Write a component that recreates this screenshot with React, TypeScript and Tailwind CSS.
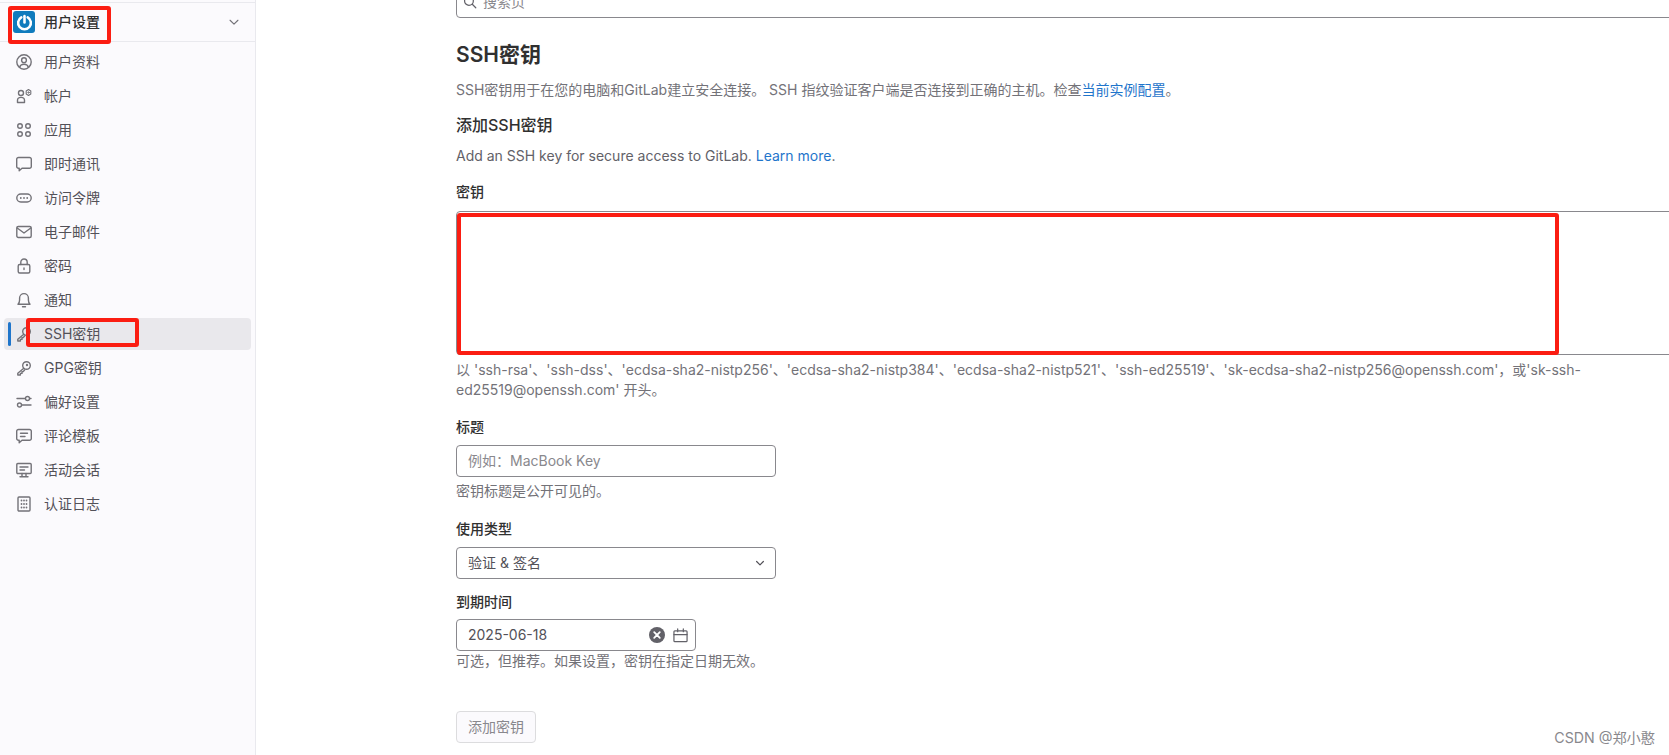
import type { ReactNode } from "react";

const font = "font-['Inter','Noto_Sans_CJK_SC',sans-serif]";

function Icon({ children }: { children: ReactNode }) {
  return (
    <svg viewBox="0 0 16 16" fill="none" stroke="currentColor" strokeWidth="1.4" strokeLinecap="round" strokeLinejoin="round" className="w-4 h-4 shrink-0 text-[#737278]">
      {children}
    </svg>
  );
}

const KeyIcon = (
  <Icon>
    <circle cx="10.5" cy="5.5" r="3.8" />
    <path d="M7.8 8.2 1.8 13.2V15h2.6v-1.6h1.6v-1.6l1.2-.2 1.4-1.6" />
    <circle cx="11" cy="5" r=".5" />
  </Icon>
);

const items: { label: string; icon: ReactNode; active?: boolean }[] = [
  {
    label: "用户资料",
    icon: (
      <Icon>
        <circle cx="8" cy="8" r="7.2" />
        <circle cx="8" cy="6.2" r="2.4" />
        <path d="M3.6 13.2c.6-2.2 2.2-3 4.4-3s3.8.8 4.4 3" />
      </Icon>
    ),
  },
  {
    label: "帐户",
    icon: (
      <Icon>
        <circle cx="5" cy="5" r="2.5" />
        <path d="M1.5 12.2a3.5 2.8 0 0 1 7 0v2.3h-7Z" />
        <path d="M12.5 1.5 14.8 3v3l-2.3 1.5L10.2 6V3Z" strokeWidth="1.1" />
        <circle cx="12.5" cy="4.5" r=".7" strokeWidth="1" />
      </Icon>
    ),
  },
  {
    label: "应用",
    icon: (
      <Icon>
        <circle cx="4" cy="4" r="2.3" />
        <circle cx="12" cy="4" r="2.3" />
        <circle cx="4" cy="12" r="2.3" />
        <circle cx="12" cy="12" r="2.3" />
      </Icon>
    ),
  },
  {
    label: "即时通讯",
    icon: (
      <Icon>
        <path d="M2.5 1.5h11a1.8 1.8 0 0 1 1.8 1.8v7.2a1.8 1.8 0 0 1-1.8 1.8H6L3.2 14.8v-2.5h-.7A1.8 1.8 0 0 1 .7 10.5V3.3a1.8 1.8 0 0 1 1.8-1.8Z" />
      </Icon>
    ),
  },
  {
    label: "访问令牌",
    icon: (
      <Icon>
        <rect x=".8" y="4" width="14.4" height="8" rx="4" />
        <path d="M4.8 8h.01M8 8h.01M11.2 8h.01" strokeWidth="1.8" />
      </Icon>
    ),
  },
  {
    label: "电子邮件",
    icon: (
      <Icon>
        <rect x=".8" y="2.5" width="14.4" height="11" rx="1.5" />
        <path d="M1.2 4 8 9l6.8-5" />
      </Icon>
    ),
  },
  {
    label: "密码",
    icon: (
      <Icon>
        <rect x="2.2" y="6.5" width="11.6" height="8.5" rx="1.5" />
        <path d="M4.8 6.5V4.2a3.2 3.2 0 0 1 6.4 0v2.3M8 10v1.5" />
      </Icon>
    ),
  },
  {
    label: "通知",
    icon: (
      <Icon>
        <path d="M2 12.2h12c-1.2-1.2-1.6-2.4-1.6-4.2V6a4.4 4.4 0 0 0-8.8 0v2c0 1.8-.4 3-1.6 4.2ZM6.5 14.8h3" />
      </Icon>
    ),
  },
  { label: "SSH密钥", icon: KeyIcon, active: true },
  { label: "GPG密钥", icon: KeyIcon },
  {
    label: "偏好设置",
    icon: (
      <Icon>
        <circle cx="11.5" cy="4.5" r="2" />
        <circle cx="3.5" cy="11" r="2" />
        <path d="M1 4.5h8M14 4.5h1M6 11h9" />
      </Icon>
    ),
  },
  {
    label: "评论模板",
    icon: (
      <Icon>
        <path d="M2.5 1.5h11a1.8 1.8 0 0 1 1.8 1.8v7.2a1.8 1.8 0 0 1-1.8 1.8H6L3.2 14.8v-2.5h-.7A1.8 1.8 0 0 1 .7 10.5V3.3a1.8 1.8 0 0 1 1.8-1.8Z" />
        <path d="M4.5 5.2h7M4.5 8.5h4.5" />
      </Icon>
    ),
  },
  {
    label: "活动会话",
    icon: (
      <Icon>
        <rect x=".8" y="1.5" width="14.4" height="10" rx="1" />
        <path d="M4 5h8M4 8h4.5M6 11.5v3M10 11.5v3M4 14.8h8" />
      </Icon>
    ),
  },
  {
    label: "认证日志",
    icon: (
      <Icon>
        <rect x="2" y="1" width="12" height="14" rx="1" />
        <path d="M5.5 4.5h.01M8 4.5h.01M10.5 4.5h.01M5.5 8h.01M8 8h.01M10.5 8h.01M5.5 11.5h.01M8 11.5h.01M10.5 11.5h.01" strokeWidth="1.8" />
      </Icon>
    ),
  },
];

function Sidebar() {
  return (
    <aside className="relative w-[256px] h-full shrink-0 bg-[#fbfafd] border-r border-[#e9e9ee] pt-[2px]">
      <div className="flex items-center h-[40px] border-y border-[#e9e9ee] pl-[13px] pr-[13px]">
        <div className="w-[22px] h-[22px] rounded-[3px] bg-[#0f7bbd] flex items-center justify-center">
          <svg viewBox="0 0 16 16" fill="none" stroke="white" strokeWidth="2.4" strokeLinecap="round" className="w-[17px] h-[17px]">
            <path d="M5 3.2a6 6 0 1 0 6 0" />
            <path d="M8 2v6" />
          </svg>
        </div>
        <span className="ml-[9px] text-sm font-medium text-[#303030]">用户设置</span>
        <svg viewBox="0 0 16 16" fill="none" stroke="#737278" strokeWidth="1.3" strokeLinecap="round" strokeLinejoin="round" className="w-3.5 h-3.5 ml-auto mr-[1px]">
          <path d="m3.5 6 4.5 4.5L12.5 6" />
        </svg>
      </div>
      <nav className="px-1 pt-[2px]">
        {items.map((item) => (
          <div key={item.label} className={`relative flex items-center h-8 mt-[2px] pl-3 rounded text-sm text-[#535158] ${item.active ? "bg-[#e9e8ec]" : ""}`}>
            {item.active && <span className="absolute left-[4px] top-[4px] bottom-[4px] w-[3px] rounded-sm bg-[#1f75cb]" />}
            {item.icon}
            <span className="ml-3">{item.label}</span>
          </div>
        ))}
      </nav>
    </aside>
  );
}

function Label({ children, className = "" }: { children: ReactNode; className?: string }) {
  return <div className={`text-sm font-medium leading-5 text-[#303030] ${className}`}>{children}</div>;
}

function Help({ children }: { children: ReactNode }) {
  return <p className="text-sm leading-5 text-[#737278]">{children}</p>;
}

function MainForm() {
  return (
    <main className="flex-1 min-w-0 pl-[200px] overflow-hidden">
      <div className="w-[1400px]">
        <div className="flex items-center gap-[6px] h-8 mt-[-14px] px-[6px] border border-[#89888d] rounded text-sm text-[#89888d]">
          <svg viewBox="0 0 16 16" fill="none" stroke="#626168" strokeWidth="1.4" strokeLinecap="round" className="w-[14px] h-[14px]">
            <circle cx="6.8" cy="6.8" r="5" />
            <path d="m10.6 10.6 4 4" />
          </svg>
          搜索页
        </div>

        <h1 className="mt-[23px] text-[21px] leading-7 font-semibold text-[#303030]">SSH密钥</h1>
        <p className="mt-[11px] text-sm leading-5 text-[#737278]">
          SSH密钥用于在您的电脑和GitLab建立安全连接。 SSH 指纹验证客户端是否连接到正确的主机。检查<span className="text-[#1f75cb]">当前实例配置</span>。
        </p>
        <h2 className="mt-[12px] text-base leading-[26px] font-medium text-[#303030]">添加SSH密钥</h2>
        <p className="mt-[8px] text-sm leading-5 text-[#626168]">
          Add an SSH key for secure access to GitLab. <span className="text-[#1f75cb]">Learn more</span>.
        </p>

        <Label className="mt-[16px]">密钥</Label>
        <textarea aria-label="密钥" className="block mt-[9px] w-full h-[144px] border border-[#89888d] rounded bg-white resize-none outline-none" />
        <div className="w-[1135px] mt-[5px]">
          <Help>
            以 'ssh-rsa'、'ssh-dss'、'ecdsa-sha2-nistp256'、'ecdsa-sha2-nistp384'、'ecdsa-sha2-nistp521'、'ssh-ed25519'、'sk-ecdsa-sha2-nistp256@openssh.com'，或'sk-ssh-ed25519@openssh.com' 开头。
          </Help>
        </div>

        <Label className="mt-[17px]">标题</Label>
        <div className="flex items-center w-[320px] h-8 mt-[8px] px-[11px] border border-[#89888d] rounded text-sm text-[#89888d]">例如：MacBook Key</div>
        <div className="mt-[4px]">
          <Help>密钥标题是公开可见的。</Help>
        </div>

        <Label className="mt-[18px]">使用类型</Label>
        <div className="flex items-center justify-between w-[320px] h-8 mt-[8px] px-[11px] border border-[#89888d] rounded text-sm text-[#535158]">
          验证 &amp; 签名
          <svg viewBox="0 0 16 16" fill="none" stroke="#535158" strokeWidth="1.6" strokeLinecap="round" strokeLinejoin="round" className="w-3 h-3 mr-[-2px]">
            <path d="m3.5 6 4.5 4.5L12.5 6" />
          </svg>
        </div>

        <Label className="mt-[13px]">到期时间</Label>
        <div className="flex items-center w-[240px] h-8 mt-[7px] pl-[11px] pr-[7px] border border-[#89888d] rounded text-sm text-[#535158]">
          2025-06-18
          <svg viewBox="0 0 16 16" className="w-4 h-4 ml-auto">
            <circle cx="8" cy="8" r="8" fill="#626168" />
            <path d="m5.2 5.2 5.6 5.6M10.8 5.2l-5.6 5.6" stroke="white" strokeWidth="1.8" strokeLinecap="round" />
          </svg>
          <svg viewBox="0 0 16 16" fill="none" stroke="#626168" strokeWidth="1.3" strokeLinecap="round" className="w-[15px] h-[15px] ml-[8px]">
            <rect x="1" y="3" width="14" height="11.5" rx="1" />
            <path d="M1 7h14M5 1v3M11 1v3" />
          </svg>
        </div>
        <Help>可选，但推荐。如果设置，密钥在指定日期无效。</Help>

        <div className="flex items-center justify-center w-[80px] h-8 mt-[40px] border border-[#dcdcde] rounded bg-[#fbfafd] text-sm text-[#89888d]">添加密钥</div>
      </div>
    </main>
  );
}

export default function App() {
  return (
    <div className={`relative flex w-[1669px] h-[755px] overflow-hidden bg-white ${font}`}>
      <Sidebar />
      <MainForm />

      {/* red annotation boxes drawn over the screenshot */}
      <div className="absolute left-[8px] top-[6px] w-[103px] h-[38px] border-4 border-[#fb1d12] rounded-[3px]" />
      <div className="absolute left-[26px] top-[318px] w-[113px] h-[29px] border-4 border-[#fb1d12] rounded-[3px]" />
      <div className="absolute left-[457px] top-[213px] w-[1102px] h-[142px] border-4 border-[#fb1d12] rounded-[3px]" />

      <span className="absolute right-[14px] bottom-[7px] text-[14.2px] text-[#89888d]">CSDN @郑小憨</span>
    </div>
  );
}
